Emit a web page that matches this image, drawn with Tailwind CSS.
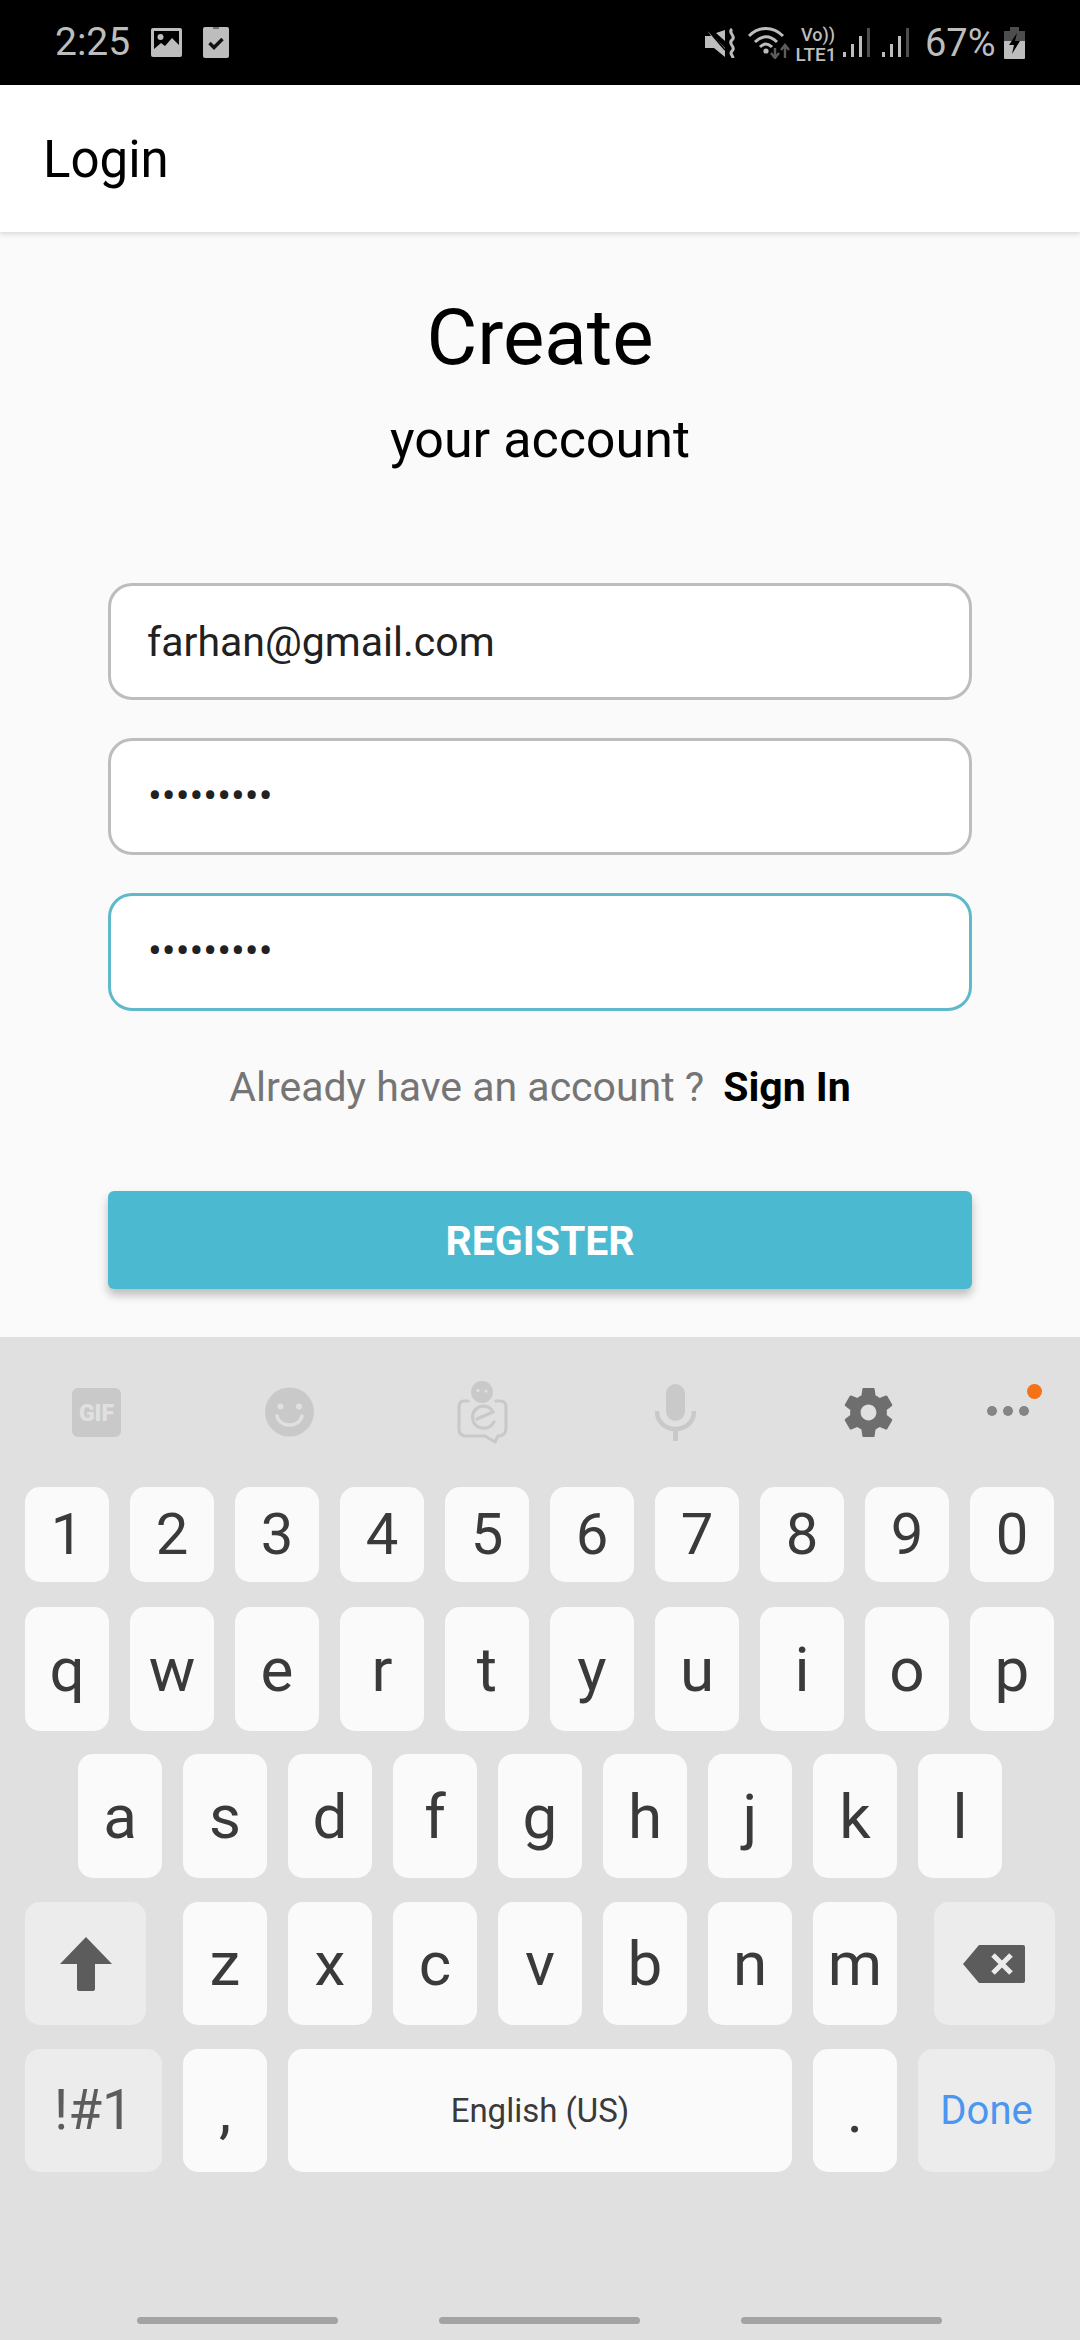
<!DOCTYPE html>
<html lang="en">
<head>
    <meta charset="UTF-8">
    <meta name="viewport" content="width=device-width, initial-scale=1.0">
    <title>Login</title>
    <script src="https://cdn.jsdelivr.net/npm/@tailwindcss/browser@4"></script>
</head>
<body class="w-[1080px] h-[2340px] overflow-hidden flex flex-col bg-[#fafafa] font-[Roboto,sans-serif]">

    <!-- status bar -->
    <div class="h-[85px] shrink-0 bg-black flex items-center text-[#bdbdbd] pl-[55px]">
        <span class="w-[74px] text-[39px] font-normal leading-none">2:25</span>
        <svg class="ml-[22px] w-[31px] h-[29px]" viewBox="0 0 31 29">
            <rect width="31" height="29" rx="2" fill="#bdbdbd"/>
            <rect x="3" y="3" width="25" height="19" fill="#000"/>
            <circle cx="9.5" cy="9" r="3" fill="#bdbdbd"/>
            <path d="M3 21 L10 15 L14 18 L21 10 L28 17 V23 H3Z" fill="#bdbdbd"/>
        </svg>
        <svg class="ml-[21px] w-[26px] h-[31px]" viewBox="0 0 26 31">
            <rect width="26" height="31" rx="2" fill="#bdbdbd"/>
            <rect x="10" y="0" width="6" height="2" fill="#000" opacity=".4"/>
            <path d="M6.5 16 L11 20.5 L19.5 12" stroke="#111" stroke-width="3.4" fill="none"/>
        </svg>

        <svg class="ml-[476px] w-[32px] h-[30px]" viewBox="0 0 32 30">
            <path d="M2 2 L20 20 V29 L9 20 H0 V8 H6Z M20 2 V13 L11 5Z" fill="#bdbdbd"/>
            <path d="M2 1 L20 22" stroke="#000" stroke-width="1.5"/>
            <path d="M27 1 C22 5 32 8 27 12 C22 16 32 19 27 23 C24 26 28 27 28 30" stroke="#bdbdbd" stroke-width="3" fill="none"/>
        </svg>
        <svg class="ml-[11px] w-[42px] h-[32px]" viewBox="0 0 42 32">
            <path d="M1 9 C11 -1 25 -1 35 9 M7 15 C14 8 22 8 29 15 M12 20 C16 16 20 16 24 20" stroke="#bdbdbd" stroke-width="3" fill="none"/>
            <circle cx="18" cy="24" r="2.6" fill="#bdbdbd"/>
            <path d="M27 31 V21 M23 26 L27 31 L31 26" stroke="#5c5c5c" stroke-width="2.4" fill="none"/>
            <path d="M37 31 V18 M33 23 L37 18 L41 23" stroke="#5c5c5c" stroke-width="2.4" fill="none"/>
        </svg>
        <div class="ml-[6px] w-[40px] flex flex-col items-center font-medium leading-none">
            <span class="text-[18px] h-[19px] pl-[4px]">Vo))</span>
            <span class="text-[19px] h-[14px]">LTE1</span>
        </div>
        <svg class="ml-[7px] w-[27px] h-[30px]" viewBox="0 0 27 30">
            <rect x="0" y="24" width="3" height="5" fill="#bdbdbd"/>
            <rect x="8" y="16" width="3" height="13" fill="#bdbdbd"/>
            <rect x="16" y="8" width="3" height="21" fill="#bdbdbd"/>
            <rect x="24" y="0" width="3" height="29" fill="#4d4d4d"/>
        </svg>
        <svg class="ml-[12px] w-[27px] h-[30px]" viewBox="0 0 27 30">
            <rect x="0" y="24" width="3" height="5" fill="#bdbdbd"/>
            <rect x="8" y="16" width="3" height="13" fill="#bdbdbd"/>
            <rect x="16" y="8" width="3" height="21" fill="#bdbdbd"/>
            <rect x="24" y="0" width="3" height="29" fill="#4d4d4d"/>
        </svg>
        <span class="ml-[16px] w-[70px] text-[38px] font-normal leading-none">67%</span>
        <svg class="ml-[9px] w-[21px] h-[32px]" viewBox="0 0 21 32">
            <path d="M6 0 H15 V4 H21 V14 H0 V4 H6Z" fill="#4d4d4d"/>
            <path d="M0 14 H21 V31 Q21 32 20 32 H1 Q0 32 0 31Z" fill="#bdbdbd"/>
            <path d="M13 6 L5 18 H10 L8 27 L16 14 H11Z" fill="#000"/>
        </svg>
    </div>

    <!-- app bar -->
    <div class="h-[147px] shrink-0 bg-white flex items-center pl-[43px] pt-[2px] shadow-[0_2px_5px_rgba(0,0,0,0.14)] relative">
        <span class="text-[51px] leading-none text-black">Login</span>
    </div>

    <!-- form -->
    <div class="h-[1105px] shrink-0 flex flex-col items-center">
        <h1 class="mt-[60px] text-[78px] leading-[92px] text-black">Create</h1>
        <p class="mt-[26px] text-[52px] leading-[60px] text-black">your account</p>

        <div class="mt-[113px] w-[864px] flex flex-col gap-[38px]">
            <div class="h-[117px] bg-white border-[3px] border-[#bdbdbd] rounded-[24px] flex items-center pl-[36px] pt-[2px] text-[41px] text-[#212121]">farhan@gmail.com</div>
            <div class="h-[117px] bg-white border-[3px] border-[#bdbdbd] rounded-[24px] flex items-center pl-[37px] text-[41px] text-[#212121]">•••••••••</div>
            <div class="h-[118px] bg-white border-[3px] border-[#5fb9cb] rounded-[24px] flex items-center pl-[37px] text-[41px] text-[#212121]">•••••••••</div>
        </div>

        <p class="mt-[51px] text-[41px] leading-[50px] text-[#757575]">Already have an account ?<span class="ml-[19px] font-bold text-black">Sign In</span></p>

        <button class="mt-[79px] w-[864px] h-[98px] pt-[3px] bg-[#4bb9cf] rounded-[6px] text-white text-[41px] font-bold shadow-[0_6px_10px_rgba(0,0,0,0.25)]">REGISTER</button>
    </div>

    <!-- keyboard -->
    <div class="flex-1 bg-[#e0e0e0] flex flex-col">
        <div class="h-[150px] flex items-center">
            <div class="w-[193px] flex justify-center">
                <svg class="w-[49px] h-[49px]" viewBox="0 0 49 49">
                    <rect width="49" height="49" rx="6" fill="#c9c9c9"/>
                    <text x="24.5" y="33" text-anchor="middle" font-family="Roboto" font-weight="900" font-size="23" fill="#e0e0e0">GIF</text>
                </svg>
            </div>
            <div class="w-[193px] flex justify-center">
                <svg class="w-[49px] h-[50px]" viewBox="0 0 49 50">
                    <circle cx="24.5" cy="25" r="24.5" fill="#c9c9c9"/>
                    <circle cx="15.5" cy="19.5" r="3" fill="#e0e0e0"/>
                    <circle cx="34" cy="19.5" r="3" fill="#e0e0e0"/>
                    <path d="M12 29 C15 41 34 41 37 29" stroke="#e0e0e0" stroke-width="3.4" stroke-linecap="round" fill="none"/>
                </svg>
            </div>
            <div class="w-[193px] flex justify-center">
                <svg class="w-[51px] h-[63px] mt-[1px]" viewBox="0 0 51 63">
                    <circle cx="25" cy="11" r="11" fill="#c9c9c9"/>
                    <circle cx="21" cy="9.5" r="1.6" fill="#e0e0e0"/>
                    <circle cx="29" cy="10" r="1.6" fill="#e0e0e0"/>
                    <path d="M11 20 H7 Q2 20 2 26 V48 Q2 55 9 55 H28 L38 61 L41 55 Q49 55 49 47 V26 Q49 20 43 20 H39" stroke="#c9c9c9" stroke-width="3.2" stroke-linecap="round" stroke-linejoin="round" fill="none"/>
                    <path d="M20 38 L36 31 C33 25 25 23 19 28 C13 34 15 46 25 47 C30 48 34 46 37 41" stroke="#c9c9c9" stroke-width="3.2" stroke-linecap="round" fill="none"/>
                </svg>
            </div>
            <div class="w-[193px] flex justify-center">
                <svg class="w-[41px] h-[57px]" viewBox="0 0 41 57">
                    <rect x="11" y="0" width="19" height="37" rx="9.5" fill="#c9c9c9"/>
                    <path d="M2 27 C2 51 39 51 39 27" stroke="#c9c9c9" stroke-width="4.5" fill="none"/>
                    <rect x="18" y="45" width="5" height="12" fill="#c9c9c9"/>
                </svg>
            </div>
            <div class="w-[193px] flex justify-center">
                <svg class="w-[49px] h-[51px]" viewBox="2.4 2 19.2 20">
                    <path d="M19.14 12.94c.04-.3.06-.61.06-.94 0-.32-.02-.64-.07-.94l2.03-1.58c.18-.14.23-.41.12-.61l-1.92-3.32c-.12-.22-.37-.29-.59-.22l-2.39.96c-.5-.38-1.03-.7-1.62-.94l-.36-2.54c-.04-.24-.24-.41-.48-.41h-3.84c-.24 0-.43.17-.47.41l-.36 2.54c-.59.24-1.13.57-1.62.94l-2.39-.96c-.22-.08-.47 0-.59.22L2.74 8.87c-.12.21-.08.47.12.61l2.03 1.58c-.05.3-.09.63-.09.94s.02.64.07.94l-2.03 1.58c-.18.14-.23.41-.12.61l1.92 3.32c.12.22.37.29.59.22l2.39-.96c.5.38 1.03.7 1.62.94l.36 2.54c.05.24.24.41.48.41h3.84c.24 0 .44-.17.47-.41l.36-2.54c.59-.24 1.13-.56 1.62-.94l2.39.96c.22.08.47 0 .59-.22l1.92-3.32c.12-.22.07-.47-.12-.61l-2.01-1.58zM12 15.1c-1.7 0-3.1-1.4-3.1-3.1s1.4-3.1 3.1-3.1 3.1 1.4 3.1 3.1-1.4 3.1-3.1 3.1z" fill="#6e6e6e"/>
                </svg>
            </div>
            <div class="relative w-[115px] h-[50px]">
                <div class="absolute left-[22px] top-[19px] flex gap-[6px]">
                    <span class="w-[10px] h-[10px] rounded-full bg-[#858585]"></span>
                    <span class="w-[10px] h-[10px] rounded-full bg-[#858585]"></span>
                    <span class="w-[10px] h-[10px] rounded-full bg-[#858585]"></span>
                </div>
                <span class="absolute left-[62px] top-[-3px] w-[15px] h-[15px] rounded-full bg-[#f57316]"></span>
            </div>
        </div>

        <!-- number row -->
        <div class="flex gap-[21px] pl-[25px] text-[#3a3a3a] text-[58px]">
            <div class="w-[84px] h-[95px] bg-[#fafafa] rounded-[15px] flex items-center justify-center">1</div>
            <div class="w-[84px] h-[95px] bg-[#fafafa] rounded-[15px] flex items-center justify-center">2</div>
            <div class="w-[84px] h-[95px] bg-[#fafafa] rounded-[15px] flex items-center justify-center">3</div>
            <div class="w-[84px] h-[95px] bg-[#fafafa] rounded-[15px] flex items-center justify-center">4</div>
            <div class="w-[84px] h-[95px] bg-[#fafafa] rounded-[15px] flex items-center justify-center">5</div>
            <div class="w-[84px] h-[95px] bg-[#fafafa] rounded-[15px] flex items-center justify-center">6</div>
            <div class="w-[84px] h-[95px] bg-[#fafafa] rounded-[15px] flex items-center justify-center">7</div>
            <div class="w-[84px] h-[95px] bg-[#fafafa] rounded-[15px] flex items-center justify-center">8</div>
            <div class="w-[84px] h-[95px] bg-[#fafafa] rounded-[15px] flex items-center justify-center">9</div>
            <div class="w-[84px] h-[95px] bg-[#fafafa] rounded-[15px] flex items-center justify-center">0</div>
        </div>

        <div class="mt-[25px] flex gap-[21px] pl-[25px] text-[#3a3a3a] text-[62px]">
            <div class="w-[84px] h-[124px] bg-[#fafafa] rounded-[15px] flex items-center justify-center">q</div>
            <div class="w-[84px] h-[124px] bg-[#fafafa] rounded-[15px] flex items-center justify-center">w</div>
            <div class="w-[84px] h-[124px] bg-[#fafafa] rounded-[15px] flex items-center justify-center">e</div>
            <div class="w-[84px] h-[124px] bg-[#fafafa] rounded-[15px] flex items-center justify-center">r</div>
            <div class="w-[84px] h-[124px] bg-[#fafafa] rounded-[15px] flex items-center justify-center">t</div>
            <div class="w-[84px] h-[124px] bg-[#fafafa] rounded-[15px] flex items-center justify-center">y</div>
            <div class="w-[84px] h-[124px] bg-[#fafafa] rounded-[15px] flex items-center justify-center">u</div>
            <div class="w-[84px] h-[124px] bg-[#fafafa] rounded-[15px] flex items-center justify-center">i</div>
            <div class="w-[84px] h-[124px] bg-[#fafafa] rounded-[15px] flex items-center justify-center">o</div>
            <div class="w-[84px] h-[124px] bg-[#fafafa] rounded-[15px] flex items-center justify-center">p</div>
        </div>

        <div class="mt-[23px] flex gap-[21px] pl-[78px] text-[#3a3a3a] text-[62px]">
            <div class="w-[84px] h-[124px] bg-[#fafafa] rounded-[15px] flex items-center justify-center">a</div>
            <div class="w-[84px] h-[124px] bg-[#fafafa] rounded-[15px] flex items-center justify-center">s</div>
            <div class="w-[84px] h-[124px] bg-[#fafafa] rounded-[15px] flex items-center justify-center">d</div>
            <div class="w-[84px] h-[124px] bg-[#fafafa] rounded-[15px] flex items-center justify-center">f</div>
            <div class="w-[84px] h-[124px] bg-[#fafafa] rounded-[15px] flex items-center justify-center">g</div>
            <div class="w-[84px] h-[124px] bg-[#fafafa] rounded-[15px] flex items-center justify-center">h</div>
            <div class="w-[84px] h-[124px] bg-[#fafafa] rounded-[15px] flex items-center justify-center">j</div>
            <div class="w-[84px] h-[124px] bg-[#fafafa] rounded-[15px] flex items-center justify-center">k</div>
            <div class="w-[84px] h-[124px] bg-[#fafafa] rounded-[15px] flex items-center justify-center">l</div>
        </div>

        <div class="mt-[24px] flex gap-[21px] pl-[25px] text-[#3a3a3a] text-[62px]">
            <div class="w-[121px] h-[123px] mr-[16px] bg-[#ececec] rounded-[15px] flex items-center justify-center">
                <svg class="w-[52px] h-[54px]" viewBox="0 0 52 54">
                    <path d="M26 0 L52 27 H35 V52 Q35 54 33 54 H19 Q17 54 17 52 V27 H0Z" fill="#5c5c5c"/>
                </svg>
            </div>
            <div class="w-[84px] h-[123px] bg-[#fafafa] rounded-[15px] flex items-center justify-center">z</div>
            <div class="w-[84px] h-[123px] bg-[#fafafa] rounded-[15px] flex items-center justify-center">x</div>
            <div class="w-[84px] h-[123px] bg-[#fafafa] rounded-[15px] flex items-center justify-center">c</div>
            <div class="w-[84px] h-[123px] bg-[#fafafa] rounded-[15px] flex items-center justify-center">v</div>
            <div class="w-[84px] h-[123px] bg-[#fafafa] rounded-[15px] flex items-center justify-center">b</div>
            <div class="w-[84px] h-[123px] bg-[#fafafa] rounded-[15px] flex items-center justify-center">n</div>
            <div class="w-[84px] h-[123px] bg-[#fafafa] rounded-[15px] flex items-center justify-center">m</div>
            <div class="w-[121px] h-[123px] ml-[16px] bg-[#ececec] rounded-[15px] flex items-center justify-center">
                <svg class="w-[62px] h-[38px] mr-[2px]" viewBox="0 0 62 38">
                    <path d="M16 0 H60 Q62 0 62 2 V36 Q62 38 60 38 H16 L0 19Z" fill="#5c5c5c"/>
                    <path d="M30 10 L48 28 M48 10 L30 28" stroke="#ececec" stroke-width="5"/>
                </svg>
            </div>
        </div>

        <div class="mt-[24px] flex gap-[21px] pl-[25px] text-[#3a3a3a] text-[62px]">
            <div class="w-[137px] h-[123px] bg-[#ececec] rounded-[15px] flex items-center justify-center text-[55px] font-normal text-[#5c5c5c]">!#1</div>
            <div class="w-[84px] h-[123px] bg-[#fafafa] rounded-[15px] flex items-center justify-center">,</div>
            <div class="w-[504px] h-[123px] bg-[#fafafa] rounded-[15px] flex items-center justify-center text-[33px]">English (US)</div>
            <div class="w-[84px] h-[123px] bg-[#fafafa] rounded-[15px] flex items-center justify-center">.</div>
            <div class="w-[137px] h-[123px] bg-[#ececec] rounded-[15px] flex items-center justify-center text-[40px] text-[#4a96f0]">Done</div>
        </div>

        <!-- nav hints -->
        <div class="mt-[145px] flex gap-[101px] pl-[137px]">
            <span class="w-[201px] h-[7px] rounded-full bg-[#a3a3a3]"></span>
            <span class="w-[201px] h-[7px] rounded-full bg-[#a3a3a3]"></span>
            <span class="w-[201px] h-[7px] rounded-full bg-[#a3a3a3]"></span>
        </div>
    </div>

</body>
</html>
